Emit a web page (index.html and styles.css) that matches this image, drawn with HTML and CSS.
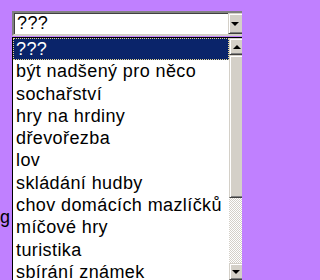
FILE: index.html
```html
<!DOCTYPE html>
<html>
<head>
<meta charset="utf-8">
<link rel="stylesheet" href="styles.css">
</head>
<body>
<div class="page">
  <div class="select">
    <span class="select-value">???</span>
    <span class="btn btn-drop"><span class="tri-down"></span></span>
  </div>
  <div class="row-label">g</div>
</div>
<div class="dropdown">
  <ul class="options">
    <li class="selected">???</li>
    <li>být nadšený pro něco</li>
    <li>sochařství</li>
    <li>hry na hrdiny</li>
    <li>dřevořezba</li>
    <li>lov</li>
    <li>skládání hudby</li>
    <li>chov domácích mazlíčků</li>
    <li>míčové hry</li>
    <li>turistika</li>
    <li>sbírání známek</li>
  </ul>
  <div class="scrollbar">
    <span class="btn btn-up"><span class="tri-up"></span></span>
    <span class="thumb"></span>
    <span class="track"></span>
    <span class="btn btn-down"><span class="tri-down"></span></span>
  </div>
</div>
</body>
</html>
```
FILE: styles.css
```css
html {
  margin: 0;
  padding: 0;
  background: #c080ff;
}
body {
  margin: 0;
  padding: 0;
  position: relative;
  width: 242px;
  height: 280px;
  overflow: hidden;
  background: #c080ff;
  font-family: "Liberation Sans", Arial, sans-serif;
  font-size: 18px;
  letter-spacing: 0.4px;
  color: #000;
}
.page {
  padding-top: 11px;
}
.select {
  margin-left: 12px;
  width: 230px;
  height: 21px;
  border-style: solid;
  border-width: 2px;
  border-color: #808080 #d4d0c8 #d4d0c8 #808080;
  box-shadow: inset 1px 1px 0 #404040;
  background: #fff;
  display: flex;
  align-items: center;
  justify-content: space-between;
}
.select-value {
  padding-left: 3px;
  line-height: 21px;
}
.btn {
  box-sizing: border-box;
  display: flex;
  align-items: center;
  justify-content: center;
  background: #d4d0c8;
  border-style: solid;
  border-width: 1px;
  border-color: #d4d0c8 #404040 #404040 #d4d0c8;
  box-shadow: inset 1px 1px 0 #fff, inset -1px -1px 0 #808080;
}
.btn-drop {
  width: 16px;
  height: 21px;
  flex: none;
}
.tri-down {
  width: 0;
  height: 0;
  border-left: 4px solid transparent;
  border-right: 4px solid transparent;
  border-top: 4px solid #000;
  margin-right: 2px;
}
.tri-up {
  width: 0;
  height: 0;
  border-left: 4px solid transparent;
  border-right: 4px solid transparent;
  border-bottom: 4px solid #000;
  margin-right: 1px;
}
.row-label {
  margin-top: 170px;
  width: 10px;
  text-align: right;
  line-height: 22px;
}
.dropdown {
  position: absolute;
  left: 12px;
  top: 37px;
  width: 232px;
  height: 250px;
  border: 1px solid #000;
  background: #fff;
  display: flex;
}
.options {
  list-style: none;
  margin: 0;
  padding: 0;
  flex: 1;
  min-width: 0;
}
.options li {
  height: 22.3px;
  line-height: 22.3px;
  padding-left: 3px;
  white-space: nowrap;
  box-sizing: border-box;
}
.options li.selected {
  background: #0a246a;
  color: #fff;
  border: 1px dotted #e8d890;
  padding-left: 2px;
  line-height: 20.3px;
}
.scrollbar {
  width: 16px;
  flex: none;
  display: flex;
  flex-direction: column;
}
.btn-up {
  height: 17px;
  flex: none;
}
.thumb {
  height: 143px;
  flex: none;
  box-sizing: border-box;
  background: #d4d0c8;
  border-style: solid;
  border-width: 1px;
  border-color: #d4d0c8 #404040 #404040 #d4d0c8;
  box-shadow: inset 1px 1px 0 #fff, inset -1px -1px 0 #808080;
}
.track {
  height: 65px;
  flex: none;
  background-color: #fff;
  background-image: repeating-conic-gradient(#d4d0c8 0 25%, #fff 0 50%);
  background-size: 2px 2px;
}
.btn-down {
  height: 17px;
  flex: none;
}
```
